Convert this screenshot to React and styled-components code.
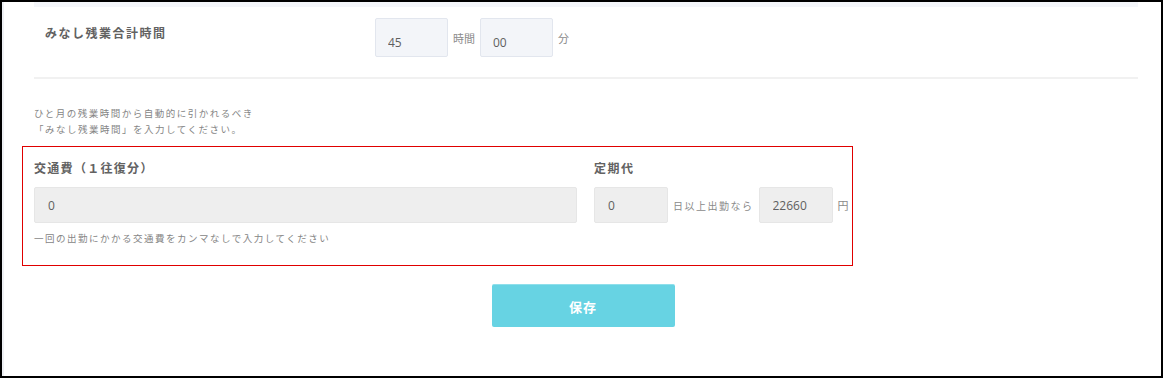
import React from 'react'
import styled, { createGlobalStyle } from 'styled-components'

const GlobalStyle = createGlobalStyle`
  body {
    margin: 0;
    background: #fff;
    font-family: "Noto Sans CJK JP", "Noto Sans", sans-serif;
  }
`

const Frame = styled.div`
  width: 1163px;
  height: 378px;
  box-sizing: border-box;
  border: 2px solid #000;
  display: flex;
  overflow: hidden;
`

const Stripe = styled.div`
  width: 2px;
  background: #eef0f4;
`

const Main = styled.div`
  margin-left: 30px;
  width: 1104px;
  display: flex;
  flex-direction: column;
`

const CardEdge = styled.div`
  height: 5px;
  background: #f4f6fa;
`

const Row = styled.div`
  display: flex;
  align-items: flex-start;
  margin-top: 11px;
`

const Heading = styled.div`
  font-size: 12px;
  line-height: 14px;
  font-weight: 700;
  color: #626262;
  letter-spacing: ${p => p.$spacing || '1.3px'};
  width: ${p => p.$width || 'auto'};
  padding-left: ${p => p.$indent || '0'};
  margin-top: ${p => p.$top || '0'};
  box-sizing: border-box;
`

const Group = styled.div`
  display: flex;
  align-items: center;
  gap: ${p => p.$gap || '5px'};
  margin-top: ${p => p.$top || '0'};
`

const Field = styled.input`
  box-sizing: border-box;
  width: ${p => p.$width || '74px'};
  height: ${p => p.$height || '36px'};
  padding: ${p => p.$pad || '0 13px'};
  margin: 0;
  border: 1px solid ${p => (p.$blue ? '#e2e6ee' : '#e6e6e6')};
  border-radius: 2px;
  background: ${p => (p.$blue ? '#f3f5f9' : '#eeeeee')};
  font-family: "Open Sans", sans-serif;
  font-size: 12px;
  color: #5f5f5f;
  outline: none;
`

const Unit = styled.span`
  font-size: ${p => p.$size || '11px'};
  color: #8a8a8a;
  letter-spacing: ${p => p.$spacing || '0'};
  white-space: nowrap;
`

const Divider = styled.div`
  height: 2px;
  background: #f1f1f1;
  margin-top: 20px;
`

const Note = styled.p`
  margin: 26px 0 0;
  font-size: 9.5px;
  line-height: 16px;
  letter-spacing: 1.5px;
  color: #858585;
`

const Section = styled.div`
  margin: 9px 0 0 -12px;
  width: 831px;
  box-sizing: border-box;
  border: 1px solid #e00000;
  padding: 14px 11px 20px;
  display: flex;
  gap: 17px;
`

const Column = styled.div`
  display: flex;
  flex-direction: column;
  width: ${p => p.$width || 'auto'};
`

const Hint = styled.div`
  margin-top: 8px;
  font-size: 9.5px;
  line-height: 14px;
  letter-spacing: 1.5px;
  color: #858585;
`

const Actions = styled.div`
  display: flex;
  justify-content: center;
  padding-right: 6px;
  margin-top: 18px;
`

const SaveButton = styled.button`
  width: 183px;
  height: 43px;
  border: none;
  border-top: 1px solid #8fdfeb;
  border-radius: 2px;
  background: #67d3e3;
  color: #fff;
  font-family: "Noto Sans CJK JP", sans-serif;
  font-size: 13px;
  font-weight: 700;
  letter-spacing: 1px;
  cursor: pointer;
`

export default function App() {
  return (
    <>
      <GlobalStyle />
      <Frame>
        <Stripe />
        <Main>
          <CardEdge />
          <Row>
            <Heading $width="341px" $indent="11px" $top="8px" $spacing="1.5px">
              みなし残業合計時間
            </Heading>
            <Group>
              <Field $blue $width="73px" $height="39px" $pad="9px 12px 0" value="45" readOnly />
              <Unit>時間</Unit>
              <Field $blue $width="73px" $height="39px" $pad="9px 12px 0" value="00" readOnly />
              <Unit>分</Unit>
            </Group>
          </Row>
          <Divider />
          <Note>
            ひと月の残業時間から自動的に引かれるべき<br />
            「みなし残業時間」を入力してください。
          </Note>
          <Section>
            <Column $width="543px">
              <Heading $spacing="1.3px">交通費（１往復分）</Heading>
              <Group $top="12px">
                <Field $width="543px" value="0" readOnly />
              </Group>
              <Hint>一回の出勤にかかる交通費をカンマなしで入力してください</Hint>
            </Column>
            <Column>
              <Heading $spacing="1.5px">定期代</Heading>
              <Group $top="12px">
                <Field value="0" readOnly />
                <Unit $size="10px" $spacing="1.5px">日以上出勤なら</Unit>
                <Field value="22660" readOnly />
                <Unit>円</Unit>
              </Group>
            </Column>
          </Section>
          <Actions>
            <SaveButton>保存</SaveButton>
          </Actions>
        </Main>
      </Frame>
    </>
  )
}
